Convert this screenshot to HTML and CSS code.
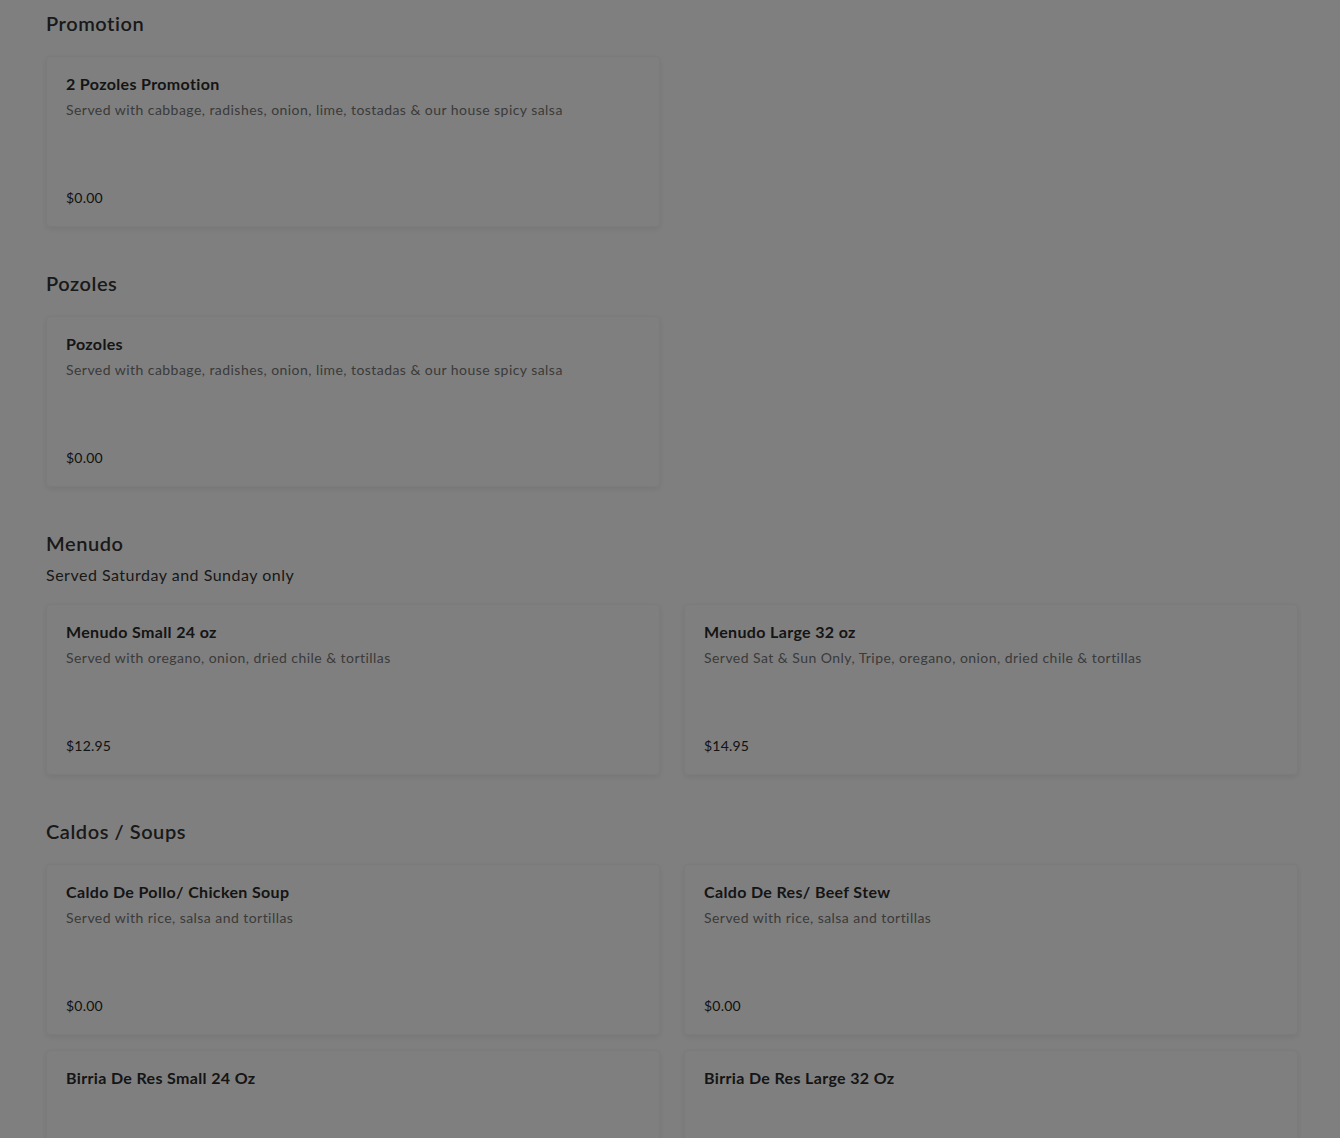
FILE: index.html
```html
<!DOCTYPE html>
<html lang="en">
<head>
<meta charset="utf-8">
<title>Menu</title>
<link rel="stylesheet" href="styles.css">
</head>
<body>
<main class="menu">
  <section class="section">
    <h2 class="section-title">Promotion</h2>
    <div class="grid">
      <article class="card">
        <h3 class="item-name">2 Pozoles Promotion</h3>
        <p class="item-desc">Served with cabbage, radishes, onion, lime, tostadas &amp; our house spicy salsa</p>
        <p class="item-price">$0.00</p>
      </article>
    </div>
  </section>

  <section class="section">
    <h2 class="section-title">Pozoles</h2>
    <div class="grid">
      <article class="card">
        <h3 class="item-name">Pozoles</h3>
        <p class="item-desc">Served with cabbage, radishes, onion, lime, tostadas &amp; our house spicy salsa</p>
        <p class="item-price">$0.00</p>
      </article>
    </div>
  </section>

  <section class="section">
    <h2 class="section-title">Menudo</h2>
    <p class="section-sub">Served Saturday and Sunday only</p>
    <div class="grid">
      <article class="card">
        <h3 class="item-name">Menudo Small 24 oz</h3>
        <p class="item-desc">Served with oregano, onion, dried chile &amp; tortillas</p>
        <p class="item-price">$12.95</p>
      </article>
      <article class="card">
        <h3 class="item-name">Menudo Large 32 oz</h3>
        <p class="item-desc">Served Sat &amp; Sun Only, Tripe, oregano, onion, dried chile &amp; tortillas</p>
        <p class="item-price">$14.95</p>
      </article>
    </div>
  </section>

  <section class="section">
    <h2 class="section-title">Caldos / Soups</h2>
    <div class="grid">
      <article class="card">
        <h3 class="item-name">Caldo De Pollo/ Chicken Soup</h3>
        <p class="item-desc">Served with rice, salsa and tortillas</p>
        <p class="item-price">$0.00</p>
      </article>
      <article class="card">
        <h3 class="item-name">Caldo De Res/ Beef Stew</h3>
        <p class="item-desc">Served with rice, salsa and tortillas</p>
        <p class="item-price">$0.00</p>
      </article>
      <article class="card">
        <h3 class="item-name">Birria De Res Small 24 Oz</h3>
        <p class="item-desc"></p>
        <p class="item-price">$0.00</p>
      </article>
      <article class="card">
        <h3 class="item-name">Birria De Res Large 32 Oz</h3>
        <p class="item-desc"></p>
        <p class="item-price">$0.00</p>
      </article>
    </div>
  </section>
</main>
<div class="overlay"></div>
</body>
</html>
```

FILE: styles.css
```css
* { box-sizing: border-box; }

html, body {
  margin: 0;
  padding: 0;
  background: #ffffff;
}

body {
  font-family: "Lato", "Liberation Sans", sans-serif;
  color: #262626;
}

.menu {
  width: 1298px;
  padding: 9px 0 40px 46px;
}

.section {
  margin-bottom: 42px;
}

.section-title {
  margin: 0;
  font-size: 20px;
  line-height: 28px;
  font-weight: 600;
  letter-spacing: 0.55px;
  color: #333333;
}

.section-sub {
  margin: 6px 0 0;
  font-size: 16px;
  line-height: 24px;
  letter-spacing: 0.5px;
  color: #333333;
}

.grid {
  margin-top: 19px;
  display: grid;
  grid-template-columns: repeat(2, 614px);
  column-gap: 24px;
  row-gap: 15px;
}

.section-sub + .grid {
  margin-top: 17px;
}

.card {
  min-height: 171px;
  background: #ffffff;
  border: 1px solid #f6f6f6;
  border-radius: 4px;
  box-shadow: 0 2px 6px rgba(0, 0, 0, 0.08);
  padding: 17px 19px 18px;
  display: flex;
  flex-direction: column;
}

.item-name {
  margin: 0;
  font-size: 16px;
  line-height: 20px;
  font-weight: 700;
  letter-spacing: 0.35px;
  color: #2b2b2b;
}

.item-desc {
  margin: 6px 0 0;
  font-size: 14px;
  line-height: 20px;
  letter-spacing: 0.45px;
  color: #767676;
  flex: 1;
}

.item-price {
  margin: 0;
  font-size: 14px;
  line-height: 20px;
  letter-spacing: 0.2px;
  color: #262626;
}

.overlay {
  position: fixed;
  inset: 0;
  background: rgba(0, 0, 0, 0.5);
}
```
